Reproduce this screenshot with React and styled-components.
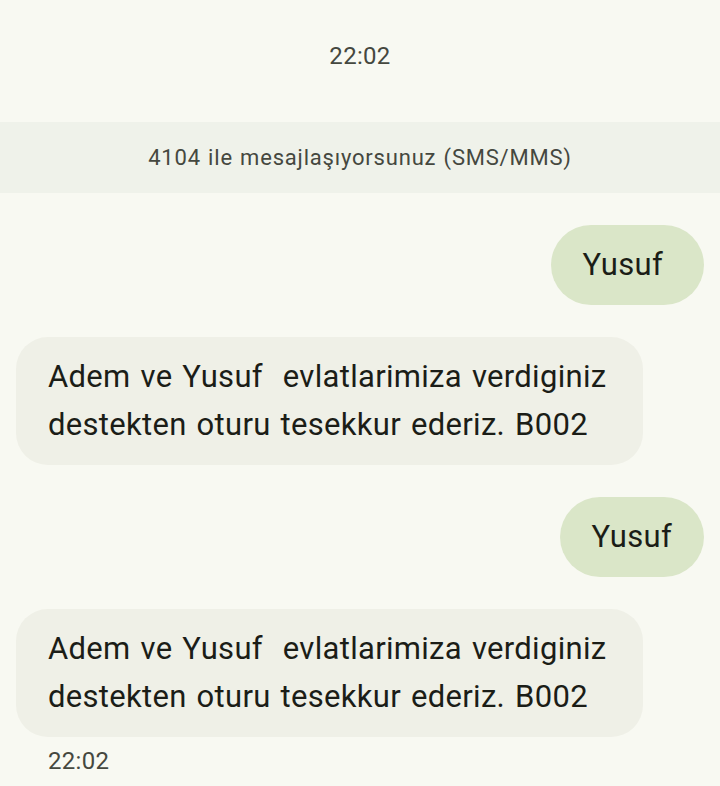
import React from "react";
import styled, { createGlobalStyle } from "styled-components";

const Global = createGlobalStyle`
  html, body { margin: 0; padding: 0; background: #f8f9f2; }
  body { font-family: Roboto, "Noto Sans", sans-serif; -webkit-font-smoothing: antialiased; }
`;

const Page = styled.div`
  width: 720px;
  height: 786px;
  background: #f8f9f2;
  display: flex;
  flex-direction: column;
  overflow: hidden;
`;

const Timestamp = styled.div`
  height: 122px;
  display: flex;
  align-items: center;
  justify-content: center;
  font-size: 24px;
  letter-spacing: 0.3px;
  color: #45483f;
  padding-bottom: 10px;
  box-sizing: border-box;
`;

const Banner = styled.div`
  height: 71px;
  background: #eff2ea;
  display: flex;
  align-items: center;
  justify-content: center;
  font-size: 22px;
  letter-spacing: 0.8px;
  word-spacing: 1px;
  color: #45483f;
`;

const Thread = styled.div`
  display: flex;
  flex-direction: column;
  gap: 32px;
  padding: 32px 16px 0 16px;
`;

const Row = styled.div`
  display: flex;
  flex-direction: column;
  align-items: ${(p) => (p.$out ? "flex-end" : "flex-start")};
`;

const Bubble = styled.div`
  box-sizing: border-box;
  background: ${(p) => (p.$out ? "#dae6c8" : "#eff0e7")};
  color: #1b1d17;
  border-radius: ${(p) => (p.$out ? "40px" : "32px")};
  padding: ${(p) =>
    p.$out ? `16px ${p.$padRight || 32}px 16px 32px` : "16px 32px"};
  font-size: 31px;
  letter-spacing: 0.3px;
  word-spacing: 2px;
  line-height: 48px;
  white-space: pre-wrap;
  width: ${(p) => (p.$out ? "auto" : "627px")};
`;

const Meta = styled.div`
  margin-top: 10px;
  padding-left: 32px;
  font-size: 24px;
  letter-spacing: 0.3px;
  color: #45483f;
`;

const msg = "Adem ve Yusuf  evlatlarimiza verdiginiz destekten oturu tesekkur ederiz. B002";

export default function App() {
  return (
    <Page>
      <Global />
      <Timestamp>22:02</Timestamp>
      <Banner>4104 ile mesajlaşıyorsunuz (SMS/MMS)</Banner>
      <Thread>
        <Row $out>
          <Bubble $out $padRight={41}>Yusuf</Bubble>
        </Row>
        <Row>
          <Bubble>{msg}</Bubble>
        </Row>
        <Row $out>
          <Bubble $out>Yusuf</Bubble>
        </Row>
        <Row>
          <Bubble>{msg}</Bubble>
          <Meta>22:02</Meta>
        </Row>
      </Thread>
    </Page>
  );
}
